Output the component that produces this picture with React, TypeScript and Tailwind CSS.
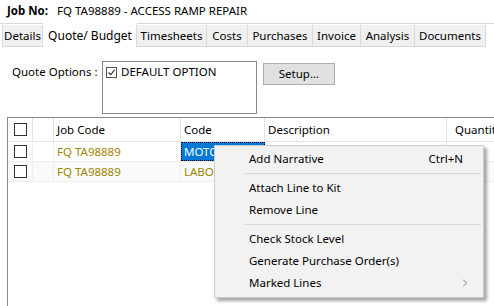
import { ChevronRight } from "lucide-react";

const tabs = [
  { label: "Details", w: "w-[41px]" },
  { label: "Quote/ Budget", w: "w-[94px]", active: true },
  { label: "Timesheets", w: "w-[71px]" },
  { label: "Costs", w: "w-[42px]" },
  { label: "Purchases", w: "w-[66px]" },
  { label: "Invoice", w: "w-[49px]" },
  { label: "Analysis", w: "w-[55px]" },
  { label: "Documents", w: "w-[72px]" },
];

const rows = [
  { job: "FQ TA98889", code: "MOTO", selected: true, bg: "bg-white" },
  { job: "FQ TA98889", code: "LABO", selected: false, bg: "bg-[#fafafa]" },
];

const Box = () => <span className="block h-[13px] w-[13px] border border-[#333333] bg-white" />;

const MenuItem = ({ label, shortcut, sub }: { label: string; shortcut?: string; sub?: boolean }) => (
  <div className="flex h-[22px] items-center justify-between pl-[34px] pr-[20px]">
    <span>{label}</span>
    {shortcut && <span>{shortcut}</span>}
    {sub && <ChevronRight className="-mr-[8px] h-[12px] w-[12px] text-[#555555]" strokeWidth={1.5} />}
  </div>
);

const Sep = () => (
  <div className="flex h-[7px] items-center pl-[30px] pr-[2px]">
    <div className="h-px w-full bg-[#d7d7d7]" />
  </div>
);

const App = () => {
  return (
    <div className="relative h-[306px] w-[494px] overflow-hidden bg-white font-['Noto_Sans',sans-serif] text-[11.5px] text-black">
      <div className="flex h-[20px] items-center pl-[7px] pt-px">
        <span className="font-bold">Job No:</span>
        <span className="ml-[9px]">FQ TA98889 - ACCESS RAMP REPAIR</span>
      </div>

      <div className="mt-[3px] flex h-[24px] border-t border-[#d9d9d9] pl-[2px]">
        {tabs.map((t) =>
          t.active ? (
            <div key={t.label} className={`${t.w} -mt-px flex h-[25px] items-center justify-center bg-white text-[12px]`}>
              {t.label}
            </div>
          ) : (
            <div
              key={t.label}
              className={`${t.w} mt-px flex h-[22px] items-center justify-center border-x border-b border-[#d9d9d9] bg-[#f0f0f0] -ml-px first:ml-0`}
            >
              {t.label}
            </div>
          )
        )}
      </div>

      <div className="mt-[14px] flex items-start pl-[12px]">
        <div className="mt-[3px] w-[90px] leading-[16px]">Quote Options :</div>
        <div className="h-[53px] w-[155px] border border-[#828790] bg-white px-[3px] pt-[2px]">
          <div className="flex h-[16px] items-center gap-[4px]">
            <span className="flex h-[11px] w-[11px] items-center justify-center border border-[#555555]">
              <svg viewBox="0 0 9 9" className="h-[9px] w-[9px]">
                <path d="M1.5 4.5 L3.7 6.7 L7.6 1.8" fill="none" stroke="#333" strokeWidth="1.1" />
              </svg>
            </span>
            <span>DEFAULT OPTION</span>
          </div>
        </div>
        <button className="ml-[6px] mt-[2px] h-[22px] w-[72px] border border-[#adadad] bg-[#e1e1e1]">Setup...</button>
      </div>

      <div className="ml-[7px] mt-[3px] w-[600px] border-l border-t border-[#8a8a8a] bg-white">
        <div className="flex h-[24px] border-b border-[#e3e3e3] bg-white">
          <div className="flex w-[25px] items-center justify-center border-r border-[#e3e3e3]">
            <Box />
          </div>
          <div className="w-[21px] border-r border-[#e3e3e3]" />
          <div className="flex w-[127px] items-center border-r border-[#e3e3e3] pl-[3px]">Job Code</div>
          <div className="flex w-[84px] items-center border-r border-[#e3e3e3] pl-[3px]">Code</div>
          <div className="flex w-[182px] items-center border-r border-[#e3e3e3] pl-[3px]">Description</div>
          <div className="flex w-[100px] items-center pl-[8px]">Quantity</div>
        </div>
        {rows.map((r, i) => (
          <div key={i} className={`flex h-[20px] border-b border-[#efefef] ${r.bg}`}>
            <div className="flex w-[25px] items-center justify-center border-r border-[#efefef]">
              <Box />
            </div>
            <div className="w-[21px] border-r border-[#efefef]" />
            <div className="flex w-[127px] items-center border-r border-[#efefef] pl-[3px] text-[#9c8700]">{r.job}</div>
            {r.selected ? (
              <div className="flex w-[84px] items-center border border-dotted border-black bg-[#0078d7] pl-[2px] text-white">
                {r.code}
              </div>
            ) : (
              <div className="flex w-[84px] items-center border-r border-[#efefef] pl-[3px] text-[#9c8700]">{r.code}</div>
            )}
            <div className="w-[182px] border-r border-[#efefef]" />
            <div className="w-[100px]" />
          </div>
        ))}
        <div className="h-[140px]" />
      </div>

      <div className="absolute left-[214px] top-[145px] w-[270px] border border-[#cccccc] bg-[#f2f2f2] pb-[3px] pt-[2px] shadow-[3px_3px_3px_rgba(0,0,0,0.35)]">
        <MenuItem label="Add Narrative" shortcut="Ctrl+N" />
        <Sep />
        <MenuItem label="Attach Line to Kit" />
        <MenuItem label="Remove Line" />
        <Sep />
        <MenuItem label="Check Stock Level" />
        <MenuItem label="Generate Purchase Order(s)" />
        <MenuItem label="Marked Lines" sub />
      </div>
    </div>
  );
};

export default App;
